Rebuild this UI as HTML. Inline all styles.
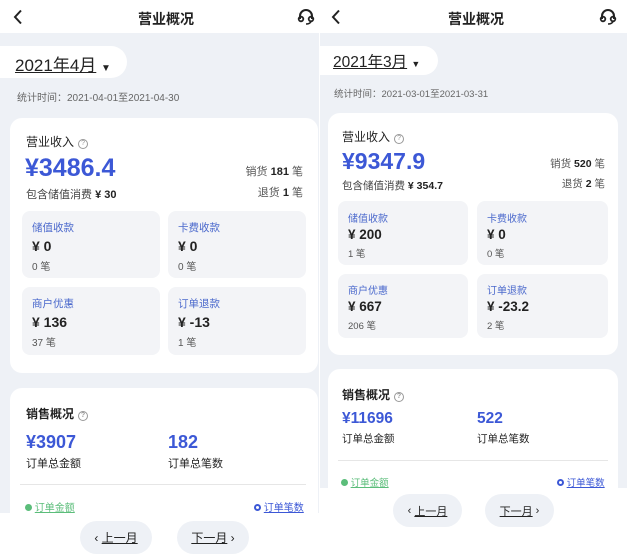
<!DOCTYPE html>
<html><head><meta charset="utf-8"><style>
*{margin:0;padding:0;box-sizing:border-box}
body{width:641px;height:560px;background:#fff;position:relative;overflow:hidden;font-family:"Liberation Sans","Noto Sans CJK SC",sans-serif;color:#222}
.a{position:absolute;white-space:nowrap}
.bg{background:#eef1f6}
.card{background:#fff;border-radius:12px}
.sub{background:#f3f4f7;border-radius:8px}
.lab{color:#4a68cc;font-size:10.5px}
.val{font-weight:bold;font-size:14px;color:#222}
.cnt{font-size:10px;color:#555}
.big{font-weight:bold;color:#3c58d6}
.g{color:#666}
.btn{background:#eef1f6;border-radius:18px;font-size:12px;display:flex;align-items:center;justify-content:center}
.btn u{text-decoration:underline}
.q{display:inline-block;width:10px;height:10px;border:1px solid #999;border-radius:50%;font-size:7px;color:#999;text-align:center;line-height:8px;vertical-align:1px;margin-left:4px}
</style></head><body>

<!-- LEFT PANEL -->
<div class="a bg" style="left:0;top:33px;width:319px;height:480px"></div>
<svg class="a" style="left:13px;top:9px" width="10" height="16" viewBox="0 0 10 16"><path d="M8 1.5 L2 8 L8 14.5" fill="none" stroke="#222" stroke-width="2"/></svg>
<div class="a" style="left:138px;top:9px;font-size:14px;font-weight:bold">营业概况</div>
<svg class="a" style="left:297px;top:9px" width="18" height="16" viewBox="0 0 18 16"><path d="M3 10 V7 a6 6 0 0 1 12 0 V10" fill="none" stroke="#222" stroke-width="2"/><circle cx="4" cy="10" r="2.3" fill="none" stroke="#222" stroke-width="1.8"/><circle cx="14" cy="10" r="2.3" fill="none" stroke="#222" stroke-width="1.8"/><path d="M14 12.5 Q13 15 9 15" fill="none" stroke="#222" stroke-width="1.6"/></svg>
<div class="a" style="left:0;top:46px;width:127px;height:32px;background:#fff;border-radius:0 16px 16px 0"></div>
<div class="a" style="left:15px;top:51px;font-size:17px;"><u>2021年4月</u> <span style="font-size:10px">▼</span></div>
<div class="a g" style="left:17px;top:89px;font-size:10px">统计时间：2021-04-01至2021-04-30</div>
<div class="a card" style="left:10px;top:118px;width:308px;height:255px"></div>
<div class="a" style="left:26px;top:133px;font-size:12px">营业收入<span class="q">?</span></div>
<div class="a big" style="left:25px;top:154px;font-size:25px">¥3486.4</div>
<div class="a" style="left:26px;top:186px;font-size:11px;color:#444">包含储值消费 <b style="color:#222">¥ 30</b></div>
<div class="a" style="right:338px;top:163px;font-size:11px;color:#555">销货 <b style="color:#222">181</b> 笔</div>
<div class="a" style="right:338px;top:184px;font-size:11px;color:#555">退货 <b style="color:#222">1</b> 笔</div>
<div class="a sub" style="left:22px;top:211px;width:138px;height:67px"></div>
<div class="a sub" style="left:168px;top:211px;width:138px;height:67px"></div>
<div class="a sub" style="left:22px;top:287px;width:138px;height:68px"></div>
<div class="a sub" style="left:168px;top:287px;width:138px;height:68px"></div>
<div class="a lab" style="left:32px;top:220px">储值收款</div><div class="a val" style="left:32px;top:238px">¥ 0</div><div class="a cnt" style="left:32px;top:258px">0 笔</div>
<div class="a lab" style="left:178px;top:220px">卡费收款</div><div class="a val" style="left:178px;top:238px">¥ 0</div><div class="a cnt" style="left:178px;top:258px">0 笔</div>
<div class="a lab" style="left:32px;top:296px">商户优惠</div><div class="a val" style="left:32px;top:314px">¥ 136</div><div class="a cnt" style="left:32px;top:334px">37 笔</div>
<div class="a lab" style="left:178px;top:296px">订单退款</div><div class="a val" style="left:178px;top:314px">¥ -13</div><div class="a cnt" style="left:178px;top:334px">1 笔</div>
<div class="a card" style="left:10px;top:388px;width:308px;height:140px"></div>
<div class="a" style="left:26px;top:405px;font-size:12px;font-weight:bold">销售概况<span class="q">?</span></div>
<div class="a big" style="left:26px;top:432px;font-size:18px">¥3907</div>
<div class="a" style="left:26px;top:455px;font-size:11px">订单总金额</div>
<div class="a big" style="left:168px;top:432px;font-size:18px">182</div>
<div class="a" style="left:168px;top:455px;font-size:11px">订单总笔数</div>
<div class="a" style="left:20px;top:484px;width:286px;height:1px;background:#e6e6e6"></div>
<div class="a" style="left:25px;top:499px;font-size:10px;color:#5bbd7a"><span style="display:inline-block;width:7px;height:7px;border-radius:50%;background:#5bbd7a"></span> <u>订单金额</u></div>
<div class="a" style="left:254px;top:499px;font-size:10px;color:#3c58d6"><span style="display:inline-block;width:7px;height:7px;border-radius:50%;border:2px solid #3c58d6"></span> <u>订单笔数</u></div>
<div class="a" style="left:0;top:513px;width:320px;height:47px;background:#fff"></div>
<div class="a btn" style="left:80px;top:521px;width:72px;height:33px">‹&nbsp;<u>上一月</u></div>
<div class="a btn" style="left:177px;top:521px;width:72px;height:33px"><u>下一月</u>&nbsp;›</div>

<!-- RIGHT PANEL -->
<div class="a bg" style="left:320px;top:33px;width:307px;height:455px"></div>
<svg class="a" style="left:331px;top:9px" width="10" height="16" viewBox="0 0 10 16"><path d="M8 1.5 L2 8 L8 14.5" fill="none" stroke="#222" stroke-width="2"/></svg>
<div class="a" style="left:448px;top:9px;font-size:14px;font-weight:bold">营业概况</div>
<svg class="a" style="left:599px;top:9px" width="18" height="16" viewBox="0 0 18 16"><path d="M3 10 V7 a6 6 0 0 1 12 0 V10" fill="none" stroke="#222" stroke-width="2"/><circle cx="4" cy="10" r="2.3" fill="none" stroke="#222" stroke-width="1.8"/><circle cx="14" cy="10" r="2.3" fill="none" stroke="#222" stroke-width="1.8"/><path d="M14 12.5 Q13 15 9 15" fill="none" stroke="#222" stroke-width="1.6"/></svg>
<div class="a" style="left:320px;top:46px;width:118px;height:29px;background:#fff;border-radius:0 15px 15px 0"></div>
<div class="a" style="left:333px;top:50px;font-size:15.5px;"><u>2021年3月</u> <span style="font-size:9px">▼</span></div>
<div class="a g" style="left:334px;top:86px;font-size:9.5px">统计时间：2021-03-01至2021-03-31</div>
<div class="a card" style="left:328px;top:113px;width:290px;height:242px"></div>
<div class="a" style="left:342px;top:128px;font-size:12px">营业收入<span class="q">?</span></div>
<div class="a big" style="left:342px;top:148px;font-size:23px">¥9347.9</div>
<div class="a" style="left:342px;top:178px;font-size:10.5px;color:#444">包含储值消费 <b style="color:#222">¥ 354.7</b></div>
<div class="a" style="right:36px;top:156px;font-size:10.5px;color:#555">销货 <b style="color:#222">520</b> 笔</div>
<div class="a" style="right:36px;top:176px;font-size:10.5px;color:#555">退货 <b style="color:#222">2</b> 笔</div>
<div class="a sub" style="left:338px;top:201px;width:130px;height:64px"></div>
<div class="a sub" style="left:477px;top:201px;width:131px;height:64px"></div>
<div class="a sub" style="left:338px;top:274px;width:130px;height:64px"></div>
<div class="a sub" style="left:477px;top:274px;width:131px;height:64px"></div>
<div class="a lab" style="left:348px;top:210px;font-size:10px">储值收款</div><div class="a val" style="left:348px;top:227px;font-size:13.5px">¥ 200</div><div class="a cnt" style="left:348px;top:246px;font-size:9.5px">1 笔</div>
<div class="a lab" style="left:487px;top:210px;font-size:10px">卡费收款</div><div class="a val" style="left:487px;top:227px;font-size:13.5px">¥ 0</div><div class="a cnt" style="left:487px;top:246px;font-size:9.5px">0 笔</div>
<div class="a lab" style="left:348px;top:282px;font-size:10px">商户优惠</div><div class="a val" style="left:348px;top:299px;font-size:13.5px">¥ 667</div><div class="a cnt" style="left:348px;top:318px;font-size:9.5px">206 笔</div>
<div class="a lab" style="left:487px;top:282px;font-size:10px">订单退款</div><div class="a val" style="left:487px;top:299px;font-size:13.5px">¥ -23.2</div><div class="a cnt" style="left:487px;top:318px;font-size:9.5px">2 笔</div>
<div class="a card" style="left:328px;top:369px;width:290px;height:140px"></div>
<div class="a" style="left:342px;top:386px;font-size:12px;font-weight:bold">销售概况<span class="q">?</span></div>
<div class="a big" style="left:342px;top:410px;font-size:15.5px">¥11696</div>
<div class="a" style="left:342px;top:431px;font-size:10.5px">订单总金额</div>
<div class="a big" style="left:477px;top:410px;font-size:15.5px">522</div>
<div class="a" style="left:477px;top:431px;font-size:10.5px">订单总笔数</div>
<div class="a" style="left:338px;top:460px;width:270px;height:1px;background:#e6e6e6"></div>
<div class="a" style="left:341px;top:475px;font-size:9.5px;color:#5bbd7a"><span style="display:inline-block;width:7px;height:7px;border-radius:50%;background:#5bbd7a"></span> <u>订单金额</u></div>
<div class="a" style="left:557px;top:475px;font-size:9.5px;color:#3c58d6"><span style="display:inline-block;width:7px;height:7px;border-radius:50%;border:2px solid #3c58d6"></span> <u>订单笔数</u></div>
<div class="a" style="left:320px;top:488px;width:321px;height:72px;background:#fff"></div>
<div class="a btn" style="left:393px;top:494px;width:69px;height:33px;font-size:11px">‹&nbsp;<u>上一月</u></div>
<div class="a btn" style="left:485px;top:494px;width:69px;height:33px;font-size:11px"><u>下一月</u>&nbsp;›</div>
</body></html>
